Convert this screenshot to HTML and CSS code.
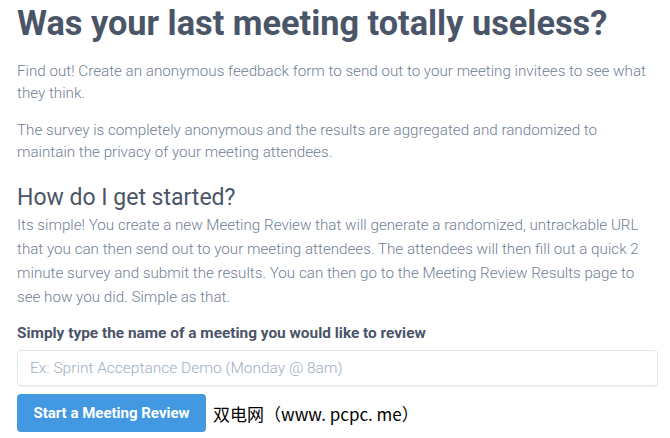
FILE: index.html
```html
<!DOCTYPE html>
<html lang="en">
<head>
<meta charset="utf-8">
<title>Meeting Review</title>
<link rel="stylesheet" href="styles.css">
</head>
<body>
<main class="page">
  <h1 class="title">Was your last meeting totally useless?</h1>
  <p class="lead">Find out! Create an anonymous feedback form to send out to your meeting invitees to see what they think.</p>
  <p class="lead">The survey is completely anonymous and the results are aggregated and randomized to maintain the privacy of your meeting attendees.</p>
  <h2 class="subtitle">How do I get started?</h2>
  <p class="body">Its simple! You create a new Meeting Review that will generate a randomized, untrackable URL that you can then send out to your meeting attendees. The attendees will then fill out a quick 2 minute survey and submit the results. You can then go to the Meeting Review Results page to see how you did. Simple as that.</p>
  <form class="form">
    <label class="label" for="meeting">Simply type the name of a meeting you would like to review</label>
    <input class="input" id="meeting" type="text" placeholder="Ex: Sprint Acceptance Demo (Monday @ 8am)">
    <div class="actions">
      <button class="button" type="button">Start a Meeting Review</button>
      <span class="watermark">双电网（www. pcpc. me）</span>
    </div>
  </form>
</main>
</body>
</html>
```

FILE: styles.css
```css
* { box-sizing: border-box; }
html, body { margin: 0; padding: 0; background: #ffffff; }
body { font-family: Roboto, "Noto Sans", sans-serif; }
.page { padding: 0 12px 0 17px; }
.title {
  margin: 0;
  padding-top: 3px;
  font-size: 34.3px;
  line-height: 40px;
  font-weight: 700;
  color: #4a5568;
}
.lead, .body {
  max-width: 634px;
  font-size: 15.2px;
  font-weight: 300;
  color: #718096;
  margin: 0;
}
.lead { line-height: 22px; margin-top: 15px; }
.lead:first-of-type { margin-top: 17px; }
.subtitle {
  margin: 20px 0 0;
  font-size: 23px;
  line-height: 30px;
  font-weight: 400;
  color: #4a5568;
}
.body { line-height: 24px; margin-top: 0; }
.form { margin-top: 14px; display: flex; flex-direction: column; }
.label {
  font-size: 15.4px;
  line-height: 20px;
  font-weight: 700;
  color: #4a5568;
}
.input {
  margin-top: 7px;
  width: 641px;
  height: 36px;
  border: 1px solid #e2e8f0;
  border-radius: 4px;
  box-shadow: 0 1px 2px rgba(0,0,0,0.06);
  padding: 0 12px;
  font-family: Roboto, sans-serif;
  font-size: 15.5px;
  font-weight: 300;
  color: #4a5568;
  outline: none;
}
.input::placeholder { color: #a0aec0; }
.actions { margin-top: 8px; display: flex; align-items: center; gap: 7px; }
.button {
  height: 38px;
  width: 189px;
  border: 0;
  border-radius: 4px;
  background: #4299e1;
  color: #ffffff;
  font-family: Roboto, sans-serif;
  font-size: 15px;
  font-weight: 700;
  padding: 0 10px;
  white-space: nowrap;
}
.watermark {
  font-family: "Noto Sans CJK SC", sans-serif;
  font-size: 17px;
  color: #000000;
  white-space: nowrap;
}
```
